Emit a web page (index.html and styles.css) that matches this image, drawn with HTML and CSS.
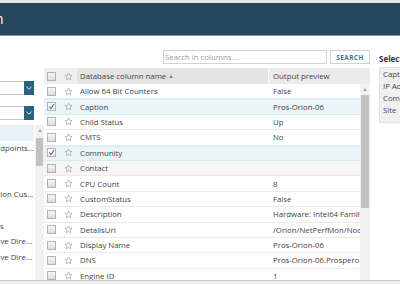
FILE: index.html
```html
<!DOCTYPE html>
<html>
<head>
<meta charset="utf-8">
<link rel="stylesheet" href="styles.css">
</head>
<body>
<div class="topstrip"></div>
<header class="titlebar"><h1 class="title">Add Column</h1></header>
<div class="content">
  <aside class="left">
    <div class="left-inner">
      <div class="select first"><span class="select-field"></span><span class="select-btn"><svg width="6" height="4" viewBox="0 0 6 4"><path d="M0.5 0.8 L3 3.2 L5.5 0.8" fill="none" stroke="#fff" stroke-width="0.9"/></svg></span></div>
      <div class="select second"><span class="select-field"></span><span class="select-btn"><svg width="6" height="4" viewBox="0 0 6 4"><path d="M0.5 0.8 L3 3.2 L5.5 0.8" fill="none" stroke="#fff" stroke-width="0.9"/></svg></span></div>
      <div class="tree-wrap">
        <ul class="tree">
          <li class="tree-item sel">Nodes</li>
          <li class="tree-item i1">UDT Endpoints and Ports</li>
          <li class="tree-item">Volumes</li>
          <li class="tree-item">Interfaces</li>
          <li class="tree-item i2">Application Custom Properties</li>
          <li class="tree-item">Alerts</li>
          <li class="tree-item i3">Groups</li>
          <li class="tree-item i4">Active Directory Users</li>
          <li class="tree-item i4">Active Directory Groups</li>
          <li class="tree-item">Events</li>
        </ul>
        <div class="vscroll small">
          <div class="vs-up"><span class="tri"></span></div>
          <div class="vs-thumb"></div>
        </div>
      </div>
    </div>
  </aside>

  <main class="main">
    <div class="toolbar">
      <input class="search" type="text" placeholder="Search in columns ...">
      <button class="search-btn">SEARCH</button>
    </div>
    <div class="grid">
      <div class="grid-head">
        <span class="h-cb"><span class="cb"></span></span>
        <span class="h-star"><svg class="star" viewBox="0 0 24 24"><path d="M12 2.5l2.9 6.1 6.6.8-4.9 4.6 1.3 6.6L12 17.3l-5.9 3.3 1.3-6.6-4.9-4.6 6.6-.8z"/></svg></span>
        <span class="h-name">Database column name <span class="sort-tri"></span></span>
        <span class="h-out">Output preview</span>
      </div>
      <div class="grid-body-wrap">
        <div class="grid-body">
          <div class="row"><span class="c-cb"><span class="cb"></span></span><span class="c-star"><svg class="star" viewBox="0 0 24 24"><path d="M12 2.5l2.9 6.1 6.6.8-4.9 4.6 1.3 6.6L12 17.3l-5.9 3.3 1.3-6.6-4.9-4.6 6.6-.8z"/></svg></span><span class="c-name">Allow 64 Bit Counters</span><span class="c-out">False</span></div>
          <div class="row checked"><span class="c-cb"><span class="cb on"><svg viewBox="0 0 10 10"><path d="M2 5.2 L4.2 8 L8.6 1.6"/></svg></span></span><span class="c-star"><svg class="star" viewBox="0 0 24 24"><path d="M12 2.5l2.9 6.1 6.6.8-4.9 4.6 1.3 6.6L12 17.3l-5.9 3.3 1.3-6.6-4.9-4.6 6.6-.8z"/></svg></span><span class="c-name">Caption</span><span class="c-out">Pros-Orion-06</span></div>
          <div class="row"><span class="c-cb"><span class="cb"></span></span><span class="c-star"><svg class="star" viewBox="0 0 24 24"><path d="M12 2.5l2.9 6.1 6.6.8-4.9 4.6 1.3 6.6L12 17.3l-5.9 3.3 1.3-6.6-4.9-4.6 6.6-.8z"/></svg></span><span class="c-name">Child Status</span><span class="c-out">Up</span></div>
          <div class="row"><span class="c-cb"><span class="cb"></span></span><span class="c-star"><svg class="star" viewBox="0 0 24 24"><path d="M12 2.5l2.9 6.1 6.6.8-4.9 4.6 1.3 6.6L12 17.3l-5.9 3.3 1.3-6.6-4.9-4.6 6.6-.8z"/></svg></span><span class="c-name">CMTS</span><span class="c-out">No</span></div>
          <div class="row checked"><span class="c-cb"><span class="cb on"><svg viewBox="0 0 10 10"><path d="M2 5.2 L4.2 8 L8.6 1.6"/></svg></span></span><span class="c-star"><svg class="star" viewBox="0 0 24 24"><path d="M12 2.5l2.9 6.1 6.6.8-4.9 4.6 1.3 6.6L12 17.3l-5.9 3.3 1.3-6.6-4.9-4.6 6.6-.8z"/></svg></span><span class="c-name">Community</span><span class="c-out"></span></div>
          <div class="row hover"><span class="c-cb"><span class="cb"></span></span><span class="c-star"><svg class="star" viewBox="0 0 24 24"><path d="M12 2.5l2.9 6.1 6.6.8-4.9 4.6 1.3 6.6L12 17.3l-5.9 3.3 1.3-6.6-4.9-4.6 6.6-.8z"/></svg></span><span class="c-name">Contact</span><span class="c-out"></span></div>
          <div class="row"><span class="c-cb"><span class="cb"></span></span><span class="c-star"><svg class="star" viewBox="0 0 24 24"><path d="M12 2.5l2.9 6.1 6.6.8-4.9 4.6 1.3 6.6L12 17.3l-5.9 3.3 1.3-6.6-4.9-4.6 6.6-.8z"/></svg></span><span class="c-name">CPU Count</span><span class="c-out">8</span></div>
          <div class="row"><span class="c-cb"><span class="cb"></span></span><span class="c-star"><svg class="star" viewBox="0 0 24 24"><path d="M12 2.5l2.9 6.1 6.6.8-4.9 4.6 1.3 6.6L12 17.3l-5.9 3.3 1.3-6.6-4.9-4.6 6.6-.8z"/></svg></span><span class="c-name">CustomStatus</span><span class="c-out">False</span></div>
          <div class="row"><span class="c-cb"><span class="cb"></span></span><span class="c-star"><svg class="star" viewBox="0 0 24 24"><path d="M12 2.5l2.9 6.1 6.6.8-4.9 4.6 1.3 6.6L12 17.3l-5.9 3.3 1.3-6.6-4.9-4.6 6.6-.8z"/></svg></span><span class="c-name">Description</span><span class="c-out">Hardware: Intel64 Family 6 Model</span></div>
          <div class="row"><span class="c-cb"><span class="cb"></span></span><span class="c-star"><svg class="star" viewBox="0 0 24 24"><path d="M12 2.5l2.9 6.1 6.6.8-4.9 4.6 1.3 6.6L12 17.3l-5.9 3.3 1.3-6.6-4.9-4.6 6.6-.8z"/></svg></span><span class="c-name">DetailsUrl</span><span class="c-out">/Orion/NetPerfMon/NodeDetails.aspx</span></div>
          <div class="row"><span class="c-cb"><span class="cb"></span></span><span class="c-star"><svg class="star" viewBox="0 0 24 24"><path d="M12 2.5l2.9 6.1 6.6.8-4.9 4.6 1.3 6.6L12 17.3l-5.9 3.3 1.3-6.6-4.9-4.6 6.6-.8z"/></svg></span><span class="c-name">Display Name</span><span class="c-out">Pros-Orion-06</span></div>
          <div class="row"><span class="c-cb"><span class="cb"></span></span><span class="c-star"><svg class="star" viewBox="0 0 24 24"><path d="M12 2.5l2.9 6.1 6.6.8-4.9 4.6 1.3 6.6L12 17.3l-5.9 3.3 1.3-6.6-4.9-4.6 6.6-.8z"/></svg></span><span class="c-name">DNS</span><span class="c-out">Pros-Orion-06.Prospero.local</span></div>
          <div class="row"><span class="c-cb"><span class="cb"></span></span><span class="c-star"><svg class="star" viewBox="0 0 24 24"><path d="M12 2.5l2.9 6.1 6.6.8-4.9 4.6 1.3 6.6L12 17.3l-5.9 3.3 1.3-6.6-4.9-4.6 6.6-.8z"/></svg></span><span class="c-name">Engine ID</span><span class="c-out">1</span></div>
        </div>
        <div class="vscroll">
          <div class="vs-up"><span class="tri"></span></div>
          <div class="vs-thumb"></div>
        </div>
      </div>
    </div>
  </main>

  <aside class="right">
    <h2 class="right-title">Selected columns</h2>
    <ul class="sel-list">
      <li>Caption</li>
      <li>IP Address</li>
      <li>Community</li>
      <li>Site</li>
    </ul>
  </aside>
</div>
<footer class="footer"></footer>
</body>
</html>
```

FILE: styles.css
```css
html, body {
  margin: 0;
  padding: 0;
}
body {
  font-family: "Open Sans", "DejaVu Sans", sans-serif;
  font-size: 7.8px;
  color: #444;
  background: #fff;
  width: 400px;
  height: 284px;
  overflow: hidden;
}

.topstrip {
  height: 3px;
  background: #e6e6e6;
}

.titlebar {
  height: 32px;
  background: #234860;
  border-bottom: 1px solid #7d95a6;
  overflow: hidden;
}
.title {
  margin: 0 0 0 -77px;
  width: 80px;
  text-align: right;
  font-size: 14px;
  font-weight: 400;
  line-height: 32px;
  color: #fff;
  white-space: nowrap;
  overflow: hidden;
}

.content {
  display: flex;
  height: 244px;
}

.footer {
  height: 3px;
  border-top: 1px solid #c9c9c9;
  background: #ededed;
}

/* left panel */
.left {
  width: 44px;
  flex: none;
  overflow: hidden;
}
.left-inner {
  margin-left: -96px;
  width: 140px;
  padding-top: 45px;
}
.select {
  display: flex;
  width: 130px;
  height: 14px;
}
.select.first { margin-bottom: 11px; }
.select.second { margin-bottom: 5px; }
.select-field {
  flex: 1;
  border: 1px solid #c8c8c8;
  border-right: 0;
  background: #fff;
}
.select-btn {
  width: 10px;
  background: #28637f;
  display: flex;
  align-items: center;
  justify-content: center;
}

.tree-wrap {
  display: flex;
  height: 155px;
}
.tree {
  list-style: none;
  margin: 0;
  padding: 0;
  width: 130px;
  margin-right: 1px;
}
.tree-item {
  height: 15.6px;
  line-height: 15.6px;
  white-space: nowrap;
  overflow: hidden;
  text-overflow: ellipsis;
  color: #444;
}
.tree-item.sel {
  background: #e7f2f8;
}
.tree-item.i1 { padding-left: 69.5px; }
.tree-item.i2 { padding-left: 67px; }
.tree-item.i3 { padding-left: 73px; }
.tree-item.i4 { padding-left: 83px; }

.vscroll {
  width: 10px;
  flex: none;
  background: #f1f1f1;
  display: flex;
  flex-direction: column;
}
.vscroll.small { width: 9px; }
.vs-up {
  height: 10px;
  display: flex;
  align-items: center;
  justify-content: center;
}
.small .vs-up { height: 11px; }
.tri {
  width: 0;
  height: 0;
  border-left: 2.5px solid transparent;
  border-right: 2.5px solid transparent;
  border-bottom: 3px solid #a3a3a3;
}
.vs-thumb {
  margin: 1px 1px 0;
  height: 113px;
  background: #c2c2c2;
}
.small .vs-thumb {
  margin-top: 2px;
  height: 28px;
}

/* main */
.main {
  width: 326px;
  flex: none;
  padding-top: 14px;
  box-sizing: border-box;
}
.toolbar {
  display: flex;
  justify-content: flex-end;
  gap: 3px;
  height: 14px;
  margin-bottom: 4px;
}
.search {
  width: 164px;
  height: 14px;
  box-sizing: border-box;
  border: 1px solid #d2d2d2;
  margin: 0;
  padding: 0 1px;
  font-family: inherit;
  font-size: 7.8px;
  color: #444;
  outline: none;
}
.search::placeholder {
  color: #9c9c9c;
}
.search-btn {
  width: 40px;
  height: 14px;
  box-sizing: border-box;
  border: 1px solid #d2d2d2;
  background: #fff;
  color: #3b7498;
  font-family: inherit;
  font-weight: 700;
  font-size: 6.4px;
  letter-spacing: 0.5px;
  padding: 0;
  margin: 0;
}

.grid-head {
  display: grid;
  grid-template-columns: 15px 18px 191px 102px;
  height: 16px;
  background: #efefef;
  align-items: stretch;
}
.grid-head > span {
  display: flex;
  align-items: center;
}
.h-name {
  background: #e3e3e3;
  padding-left: 3px;
}
.h-out {
  background: #ebebeb;
  border-left: 1px solid #fafafa;
  padding-left: 4px;
}
.sort-tri {
  display: inline-block;
  margin-left: 3px;
  width: 0;
  height: 0;
  border-left: 2.5px solid transparent;
  border-right: 2.5px solid transparent;
  border-bottom: 3px solid #888;
}

.grid-body-wrap {
  display: flex;
  height: 196px;
  overflow: hidden;
}
.grid-body {
  width: 316px;
  flex: none;
}
.row {
  display: grid;
  grid-template-columns: 15px 18px 191px 92px;
  height: 15.4px;
  box-sizing: border-box;
  border-bottom: 1px solid #ebebeb;
  align-items: center;
  white-space: nowrap;
  background: #fff;
}
.row.checked {
  background: #eaf5fa;
  border-bottom-color: #d8e9f2;
  box-shadow: inset 0 1px 0 #d8e9f2;
}
.row.hover {
  background: #f6f6f6;
}
.c-cb, .h-cb {
  padding-left: 3px;
  display: flex;
  align-items: center;
}
.c-star, .h-star {
  padding-left: 5px;
  display: flex;
  align-items: center;
}
.c-name {
  padding-left: 3px;
  overflow: hidden;
}
.c-out {
  padding-left: 5px;
  overflow: hidden;
  color: #444;
}

.cb {
  display: block;
  width: 9px;
  height: 9px;
  box-sizing: border-box;
  border: 1px solid #b3b3b3;
  background: linear-gradient(#f6f6f6, #dedede);
}
.cb.on {
  background: linear-gradient(#fbfbfb, #e9e9e9);
}
.cb svg {
  display: block;
  width: 7px;
  height: 7px;
}
.cb svg path {
  fill: none;
  stroke: #25418d;
  stroke-width: 1.4;
}
.star {
  display: block;
  width: 9px;
  height: 9px;
}
.star path {
  fill: none;
  stroke: #9d9d9d;
  stroke-width: 1.8;
  stroke-linejoin: round;
}

/* right panel */
.right {
  margin-left: 9px;
  flex: 1;
  min-width: 0;
  padding-top: 17px;
  overflow: hidden;
  white-space: nowrap;
}
.right-title {
  margin: 0 0 2px;
  font-size: 8px;
  line-height: 12px;
  font-weight: 700;
  color: #333;
}
.sel-list {
  list-style: none;
  margin: 0;
  padding: 0 0 6px 3px;
  background: #f0f0f0;
  border: 1px solid #e1e1e1;
  border-right: 0;
}
.sel-list li {
  line-height: 12px;
  height: 12px;
  color: #444;
}
```
